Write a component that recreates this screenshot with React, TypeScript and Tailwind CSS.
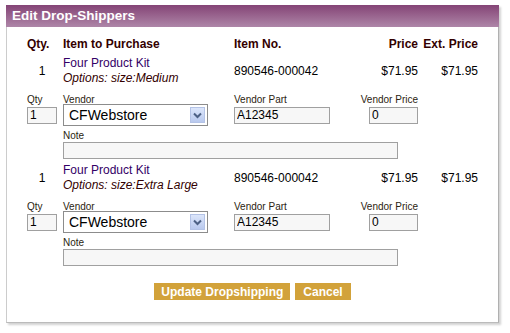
import React from 'react';

const items = [
  { name: 'Four Product Kit', options: 'Options: size:Medium', sku: '890546-000042', price: '$71.95', ext: '$71.95' },
  { name: 'Four Product Kit', options: 'Options: size:Extra Large', sku: '890546-000042', price: '$71.95', ext: '$71.95' },
];

export default function App() {
  return (
    <div className="min-h-screen bg-white pl-[6px] pt-[5px] font-['Liberation_Sans',Arial,sans-serif] text-black">
      <div className="w-[493px] h-[318px] border border-[#cccccc] border-r-[#b0b0b0] border-b-[#bbbbbb] bg-white shadow-[2px_2px_2px_rgba(0,0,0,0.18)]">
        {/* Title bar */}
        <div className="h-[22px] -mx-px -mt-px flex items-center pl-[6px] bg-gradient-to-b from-[#844476] to-[#ae86a8]">
          <span className="text-white font-bold text-[13.5px] leading-none">Edit Drop-Shippers</span>
        </div>

        {/* Column headers */}
        <div className="mt-[10px] flex pl-[20px] text-[12px] leading-[15px] font-bold text-[#330000]">
          <div className="w-[30px]">Qty.</div>
          <div className="ml-[6px] w-[171px]">Item to Purchase</div>
          <div className="w-[124px]">Item No.</div>
          <div className="w-[60px] text-right">Price</div>
          <div className="w-[60px] text-right">Ext. Price</div>
        </div>

        {items.map((item, i) => (
          <ItemBlock key={i} item={item} />
        ))}

        {/* Buttons */}
        <div className="mt-[17px] flex justify-center gap-[5px]">
          <button className="h-[17px] px-[7px] bg-[#d2a23a] text-white font-bold text-[12px] leading-none">
            Update Dropshipping
          </button>
          <button className="h-[17px] px-[8px] bg-[#d2a23a] text-white font-bold text-[12px] leading-none">
            Cancel
          </button>
        </div>
      </div>
    </div>
  );
}

function ItemBlock({ item }: { item: { name: string; options: string; sku: string; price: string; ext: string } }) {
  const inputCls =
    'block h-[17px] border border-[#a0a0a0] bg-[#f7f7f7] px-[2px] text-[12px] leading-none text-black outline-none font-[inherit]';

  return (
    <div>
      {/* Item row */}
      <div className="mt-[4px] flex items-center pl-[20px] text-[12px] leading-[15px]">
        <div className="w-[30px] text-center">1</div>
        <div className="ml-[6px] w-[171px]">
          <div className="text-[#330066]">{item.name}</div>
          <div className="italic text-[#330000]">{item.options}</div>
        </div>
        <div className="w-[124px]">{item.sku}</div>
        <div className="w-[60px] text-right">{item.price}</div>
        <div className="w-[60px] text-right">{item.ext}</div>
      </div>

      {/* Labels */}
      <div className="mt-[8px] flex pl-[20px] text-[10px] leading-[12px] text-[#2b2410]">
        <div className="w-[30px]">Qty</div>
        <div className="ml-[6px] w-[171px]">Vendor</div>
        <div className="w-[124px]">Vendor Part</div>
        <div className="w-[60px] text-right">Vendor Price</div>
      </div>

      {/* Inputs */}
      <div className="h-[22px] -mt-[2px] flex items-center pl-[20px]">
        <div className="w-[30px]">
          <input className={`${inputCls} w-[30px]`} defaultValue="1" />
        </div>
        <div className="ml-[6px] w-[171px]">
          <div className="w-[145px] h-[22px] border border-[#8c8c8c] bg-white flex items-center justify-between pl-[5px] pr-[2px]">
            <span className="text-[14px] leading-none">CFWebstore</span>
            <div className="w-[15px] h-[16px] bg-gradient-to-b from-[#dce6fb] to-[#b9c9ee] border border-[#b4c3e6] flex items-center justify-center">
              <svg width="9" height="7" viewBox="0 0 9 7">
                <path d="M1 1.5 L4.5 5 L8 1.5" fill="none" stroke="#4d6185" strokeWidth="2" />
              </svg>
            </div>
          </div>
        </div>
        <div className="w-[124px]">
          <input className={`${inputCls} w-[96px]`} defaultValue="A12345" />
        </div>
        <div className="w-[60px] flex justify-end">
          <input className={`${inputCls} w-[49px]`} defaultValue="0" />
        </div>
      </div>

      {/* Note */}
      <div className="mt-[4px] pl-[56px]">
        <div className="text-[10px] leading-[12px] text-[#2b2410]">Note</div>
        <input className={`${inputCls} w-[335px]`} />
      </div>
    </div>
  );
}
